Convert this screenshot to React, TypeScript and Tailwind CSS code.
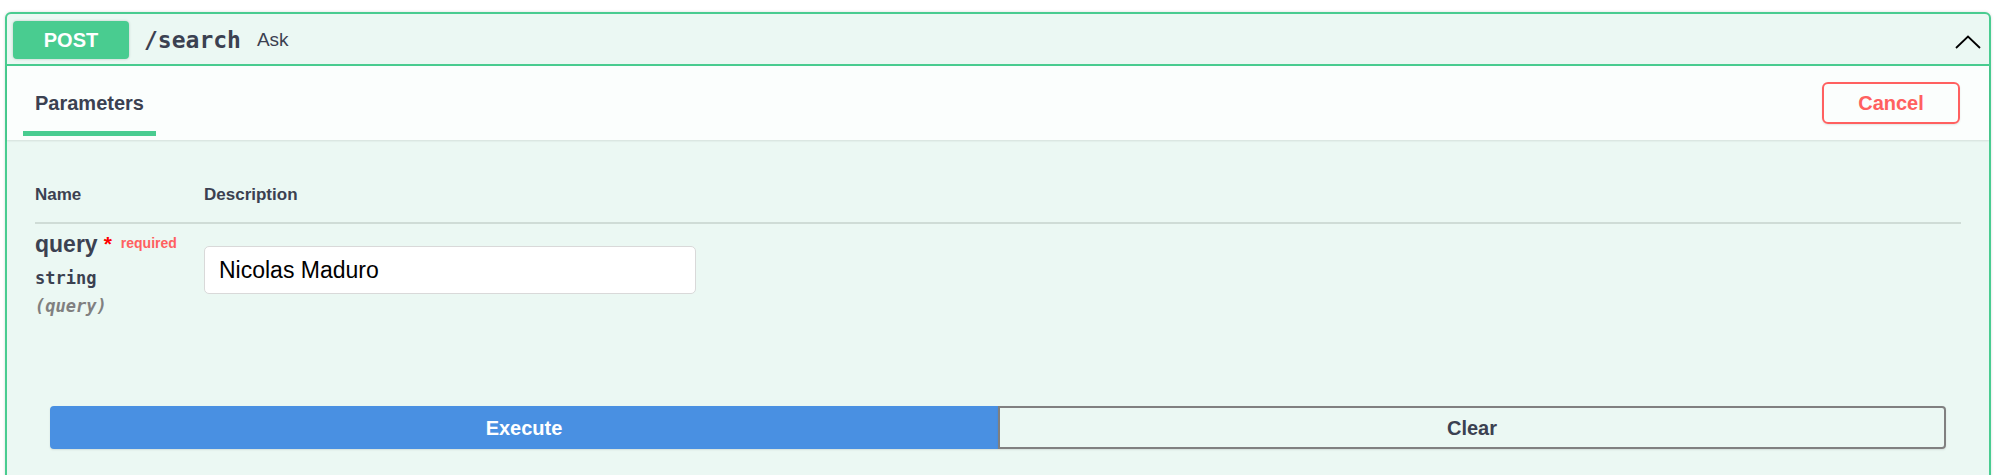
import React, { useState } from "react"

const sans = { fontFamily: '"Liberation Sans", Arial, sans-serif' }
const mono = { fontFamily: '"DejaVu Sans Mono", "Liberation Mono", monospace' }

// Collapsed/expanded chevron in the summary bar
function Chevron() {
  return (
    <svg width="26" height="14" viewBox="0 0 26 14" className="mt-[3px] mr-[8px]">
      <polyline points="1,13 13,1.5 25,13" fill="none" stroke="#000" strokeWidth="1.8" />
    </svg>
  )
}

export default function App() {
  const [query, setQuery] = useState("Nicolas Maduro")

  return (
    <div className="min-h-screen bg-white pt-[12px]" style={sans}>
      <div className="ml-[5px] w-[1986px] rounded-[6px] border-2 border-[#49cc90] bg-[#ebf8f3] shadow-[0_0_3px_rgba(0,0,0,0.15)] text-[#3b4151]">
        {/* Summary */}
        <div className="flex items-center border-b-2 border-[#49cc90] pl-[6px] pt-[7px] pb-[5px]">
          <div className="flex h-[38px] w-[116px] items-center justify-center rounded-[4px] bg-[#49cc90] text-[20px] font-bold text-white shadow-[0_0_3px_rgba(0,0,0,0.19)]">
            POST
          </div>
          <span className="ml-[15px] text-[23px] font-bold" style={mono}>
            /search
          </span>
          <span className="ml-[16px] text-[19px]">Ask</span>
          <div className="flex-1" />
          <Chevron />
        </div>

        {/* Section header */}
        <div className="flex h-[74px] items-stretch justify-between bg-white/80 pl-[16px] pr-[29px] shadow-[0_1px_2px_rgba(0,0,0,0.1)]">
          <div className="relative flex items-center px-[12px]">
            <span className="text-[20px] font-bold">Parameters</span>
            <div className="absolute bottom-[4px] left-0 right-0 h-[5px] bg-[#49cc90]" />
          </div>
          <div className="flex items-center">
            <button className="h-[42px] w-[138px] rounded-[6px] border-2 border-[#ff6060] text-[20px] font-bold text-[#ff6060] shadow-[0_1px_2px_rgba(0,0,0,0.1)]">
              Cancel
            </button>
          </div>
        </div>

        {/* Parameters table */}
        <div className="px-[28px] pt-[45px] pb-[40px]">
          <div className="flex border-b-2 border-[#cfdcd6] pb-[17px] text-[17px] font-bold leading-[20px]">
            <div className="w-[169px]">Name</div>
            <div>Description</div>
          </div>

          <div className="flex pt-[7px]">
            <div className="w-[169px]">
              <div className="flex items-start leading-[26px]">
                <span className="text-[23px] font-bold">query</span>
                <span className="ml-[6px] text-[21px] font-bold text-[#ff0000]">*</span>
                <span className="relative top-[4px] pl-[9px] text-[14px] font-bold leading-[16px] text-[#ff6060]">
                  required
                </span>
              </div>
              <div className="mt-[11px] text-[17px] font-bold leading-[20px]" style={mono}>
                string
              </div>
              <div className="mt-[8px] text-[17px] font-bold italic leading-[20px] text-[#808080]" style={mono}>
                (query)
              </div>
            </div>
            <div className="pt-[15px]">
              <input
                value={query}
                onChange={(e) => setQuery(e.target.value)}
                className="h-[48px] w-[492px] rounded-[5px] border border-[#d9d9d9] bg-white px-[14px] text-[23px] text-black outline-none"
                style={sans}
              />
            </div>
          </div>

          {/* Execute / Clear */}
          <div className="mt-[90px] flex px-[15px]">
            <button className="h-[43px] flex-1 rounded-l-[4px] border-2 border-[#4990e2] bg-[#4990e2] text-[20px] font-bold text-white shadow-[0_1px_2px_rgba(0,0,0,0.1)]">
              Execute
            </button>
            <button className="h-[43px] flex-1 rounded-r-[4px] border-2 border-[#808080] bg-transparent text-[20px] font-bold text-[#3b4151] shadow-[0_1px_2px_rgba(0,0,0,0.1)]">
              Clear
            </button>
          </div>
        </div>
      </div>
    </div>
  )
}
